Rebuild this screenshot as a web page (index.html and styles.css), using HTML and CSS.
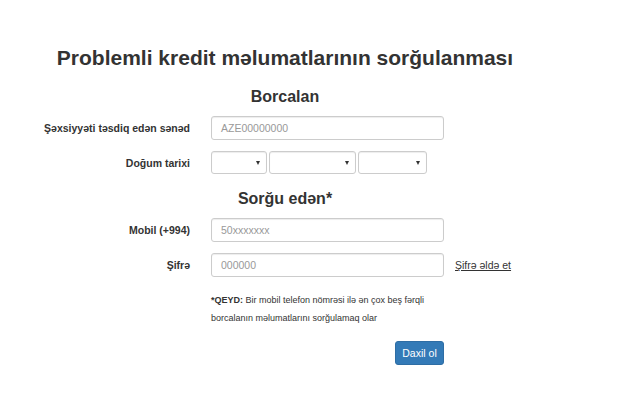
FILE: index.html
```html
<!DOCTYPE html>
<html lang="az">
<head>
<meta charset="utf-8">
<title>Problemli kredit məlumatlarının sorğulanması</title>
<link rel="stylesheet" href="styles.css">
</head>
<body>
<div class="page">
  <h1 class="title">Problemli kredit məlumatlarının sorğulanması</h1>
  <h2 class="section">Borcalan</h2>
  <div class="row">
    <label class="lbl">Şəxsiyyəti təsdiq edən sənəd</label>
    <div class="input"><span class="ph">AZE00000000</span></div>
  </div>
  <div class="row row-gap">
    <label class="lbl">Doğum tarixi</label>
    <div class="selects">
      <div class="select s-day"><span class="caret"></span></div>
      <div class="select s-month"><span class="caret"></span></div>
      <div class="select s-year"><span class="caret"></span></div>
    </div>
  </div>
  <h2 class="section section2">Sorğu edən*</h2>
  <div class="row">
    <label class="lbl">Mobil (+994)</label>
    <div class="input"><span class="ph">50xxxxxxx</span></div>
  </div>
  <div class="row row-gap">
    <label class="lbl">Şifrə</label>
    <div class="input"><span class="ph">000000</span></div>
    <a class="link" href="#">Şifrə əldə et</a>
  </div>
  <div class="note-row">
    <p class="note"><span class="note-line"><b class="note-key">*QEYD:</b> Bir mobil telefon nömrəsi ilə ən çox beş fərqli</span><span class="note-line">borcalanın məlumatlarını sorğulamaq olar</span></p>
  </div>
  <div class="btn-row">
    <button class="btn" type="button">Daxil ol</button>
  </div>
</div>
</body>
</html>
```
FILE: styles.css
```css
html, body {
  margin: 0;
  padding: 0;
  background: #ffffff;
}
body {
  font-family: "Liberation Sans", Arial, sans-serif;
  color: #333333;
}
.page {
  width: 570px;
  padding-top: 46px;
}
.title {
  margin: 0;
  font-size: 21px;
  line-height: 23px;
  font-weight: bold;
  text-align: center;
  color: #333333;
}
.section {
  margin: 19px 0 0;
  font-size: 16px;
  line-height: 18px;
  font-weight: bold;
  text-align: center;
  color: #333333;
}
.section2 {
  margin-top: 16px;
}
.row {
  display: flex;
  align-items: center;
  margin-top: 10px;
}
.row-gap {
  margin-top: 11px;
}
.lbl {
  width: 190px;
  margin-right: 21px;
  flex: none;
  text-align: right;
  font-size: 10.5px;
  font-weight: bold;
  color: #333333;
}
.input {
  width: 233px;
  height: 24px;
  box-sizing: border-box;
  border: 1px solid #cccccc;
  border-radius: 3px;
  box-shadow: inset 0 1px 1px rgba(0, 0, 0, 0.075);
  display: flex;
  align-items: center;
  padding-left: 9px;
  flex: none;
}
.ph {
  font-size: 10.5px;
  color: #999999;
}
.selects {
  display: flex;
  gap: 2px;
}
.select {
  height: 23px;
  box-sizing: border-box;
  border: 1px solid #cccccc;
  border-radius: 3px;
  box-shadow: inset 0 1px 1px rgba(0, 0, 0, 0.075);
  display: flex;
  align-items: center;
  justify-content: flex-end;
  padding-right: 6px;
}
.s-day { width: 56px; }
.s-month { width: 87px; }
.s-year { width: 69px; }
.caret {
  width: 0;
  height: 0;
  border-left: 2.5px solid transparent;
  border-right: 2.5px solid transparent;
  border-top: 4px solid #333333;
}
.link {
  margin-left: 11px;
  font-size: 10.5px;
  color: #333333;
  text-decoration: underline;
}
.note-row {
  padding-left: 211px;
  margin-top: 14px;
}
.note {
  margin: 0;
  font-size: 9px;
  line-height: 18px;
  color: #333333;
}
.note-line {
  display: block;
  white-space: nowrap;
}
.btn-row {
  width: 444px;
  display: flex;
  justify-content: flex-end;
  margin-top: 14px;
}
.btn {
  width: 49px;
  height: 24px;
  box-sizing: border-box;
  padding: 0;
  background: #337ab7;
  border: 1px solid #2e6da4;
  border-radius: 3px;
  color: #ffffff;
  font-family: "Liberation Sans", Arial, sans-serif;
  font-size: 10.5px;
}
```
